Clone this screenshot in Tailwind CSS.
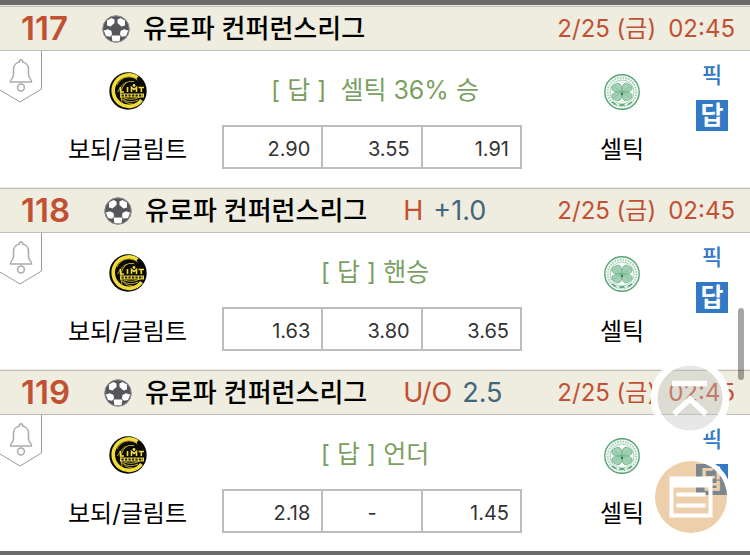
<!DOCTYPE html>
<html lang="ko">
<head>
<meta charset="utf-8">
<meta name="viewport" content="width=device-width, initial-scale=1">
<title>유로파 컨퍼런스리그</title>
<script src="https://cdn.jsdelivr.net/npm/@tailwindcss/browser@4"></script>
</head>
<body class="relative bg-white text-black font-['Inter','Noto_Sans_CJK_KR',sans-serif]">

<svg class="hidden" aria-hidden="true">
  <symbol id="ball" viewBox="0 0 28 28">
    <defs><clipPath id="ballclip"><circle cx="14" cy="14" r="13"/></clipPath></defs>
    <circle cx="14" cy="14" r="13.5" fill="#888"/>
    <g clip-path="url(#ballclip)">
      <circle cx="14" cy="14" r="13" fill="#55565a"/>
      <g fill="#fff">
        <path d="M5 5.500 9.500 3 12.500 4.500 12.500 8 8.500 11.500 5 10.500Z"/>
        <path d="M23 5.500 18.500 3 15.500 4.500 15.500 8 19.500 11.500 23 10.500Z"/>
        <path d="M1.800 15.500 6 14.200 9.500 16 10 19.500 8 21.800 4 21Z"/>
        <path d="M26.200 15.500 22 14.200 18.500 16 18 19.500 20 21.800 24 21Z"/>
        <path d="M9.500 20.500H18.500L17.500 26.500H10.500Z"/>
      </g>
    </g>
    <circle cx="14" cy="14" r="13.200" fill="none" stroke="#8a8a8a" stroke-width="1"/>
  </symbol>
  <symbol id="bell" viewBox="0 0 43 53">
    <path d="M41.500 0V38L20 51 0 39" fill="none" stroke="#999" stroke-width="1"/>
    <g fill="none" stroke="#aaa" stroke-width="1.500" stroke-linejoin="round">
      <path d="M10.500 31C10 28.500 13 28 13.500 24V18.500C13.500 14.500 16 11.500 19.500 11V9.500Q21 8 22.500 9.500V11C26 11.500 28.500 14.500 28.500 18.500V24C29 28 32 28.500 31.500 31Z"/>
      <circle cx="21" cy="36.500" r="3.400"/>
    </g>
  </symbol>
  <symbol id="bodo" viewBox="0 0 38 38">
    <circle cx="19" cy="19" r="18.700" fill="#090905"/>
    <path d="M28.500 5.500A15.700 15.700 0 1 0 32.500 28" fill="none" stroke="#f2dc3b" stroke-width="3.600"/>
    <g fill="none" stroke="#c9b833" stroke-width=".9">
      <path d="M28.500 8A13 13 0 0 0 8 13M25 9.500Q14 8 8.500 20M18 10Q9 17 13 30M14 27Q20 32 29 28M15 26Q23 29 31 25M12 25Q16 32 24 32"/>
    </g>
    <path d="M11.500 15V20H15M18.500 15V20M22.500 20V15.500L25 17.500 27.500 15.500V20M29.500 15.500H35M32.300 15.500V20" stroke="#f2dc3b" stroke-width="1.600" fill="none"/>
    <circle cx="25" cy="13.500" r="1.400" fill="#f2dc3b"/>
    <path d="M11 21.500H35V25.500H11Z" fill="#e8d238"/>
    <path d="M12.500 23.500H34" stroke="#222" stroke-width="1.800" stroke-dasharray="2.200 1.300"/>
  </symbol>
  <symbol id="celtic" viewBox="0 0 36 36">
    <circle cx="18" cy="18" r="17.200" fill="#f6fbf8" stroke="#57a575" stroke-width="1.400"/>
    <circle cx="18" cy="18" r="14.300" fill="none" stroke="#a3cfb4" stroke-width="2" stroke-dasharray="1.500 1.200"/>
    <circle cx="18" cy="18" r="12" fill="none" stroke="#93c7a7" stroke-width=".8"/>
    <g fill="#a4d1b6" stroke="#62ab7e" stroke-width=".8">
      <path d="M18 18C12 18.500 7 16.500 8 14 7.500 11 11 11 12.500 9.500 16 8 18.500 12 18 18Z"/>
      <path d="M18 18C24 18.500 29 16.500 28 14 28.500 11 25 11 23.500 9.500 20 8 17.500 12 18 18Z"/>
      <path d="M18 18C12 17.500 7 19.500 8 22 7.500 25 11 25 12.500 26.500 16 28 18.500 24 18 18Z"/>
      <path d="M18 18C24 17.500 29 19.500 28 22 28.500 25 25 25 23.500 26.500 20 28 17.500 24 18 18Z"/>
    </g>
    <path d="M18 18 10.500 13M18 18 25.500 13M18 18 10.500 23M18 18 25.500 23" stroke="#6fb389" stroke-width=".6"/>
    <circle cx="18" cy="20" r="1.200" fill="#28834e"/>
    <path d="M8 28 12 30.500M28 28 24 30.500M15.500 31H20.500" stroke="#429765" stroke-width="1.300"/>
  </symbol>
</svg>

<main class="border-t-5 border-b-4 border-[#6b6b6b]">

  <article class="border-t border-[#efeddf]">
    <header class="flex h-[45px] items-center border-y border-[#bdbdbd] bg-[#efeddf] pr-[15px] pl-[21px]">
      <span class="text-[33px] leading-none font-semibold text-[#c25033]">117</span>
      <svg class="ml-[34px] size-7" role="img" aria-label="축구"><use href="#ball"/></svg>
      <h2 class="ml-[13px] text-[26px] leading-none font-medium">유로파 컨퍼런스리그</h2>
      <time class="ml-auto flex gap-3 text-2xl leading-none text-[#c25033]"><span>2/25 (금)</span><span>02:45</span></time>
    </header>
    <div class="relative grid grid-cols-[222fr_300fr_228fr]">
      <button class="absolute top-0 left-0" aria-label="알림"><svg class="h-[53px] w-[43px]"><use href="#bell"/></svg></button>
      <section class="flex flex-col items-center pt-[21px] pl-[33px]">
        <svg class="size-[38px]" role="img" aria-label="보되/글림트 로고"><use href="#bodo"/></svg>
        <span class="mt-6 text-2xl leading-8">보되/글림트</span>
      </section>
      <section class="flex flex-col items-stretch pt-5 pb-[18px]">
        <p class="mb-4 pl-1.5 text-center text-[25px] leading-[38px] whitespace-pre text-[#7b9f62]">[ 답 ]  셀틱 36% 승</p>
        <table class="h-11 w-full table-fixed border-collapse text-right text-xl leading-none text-[#333]">
          <tr><td class="border-2 border-[#bdbdbd] pt-[3px] pr-[11px]">2.90</td><td class="border-2 border-[#bdbdbd] pt-[3px] pr-[11px]">3.55</td><td class="border-2 border-[#bdbdbd] pt-[3px] pr-[11px]">1.91</td></tr>
        </table>
      </section>
      <div class="flex">
        <section class="flex flex-1 flex-col items-center pt-[23px] pl-12">
          <svg class="size-9" role="img" aria-label="셀틱 로고"><use href="#celtic"/></svg>
          <span class="mt-6 text-2xl leading-8">셀틱</span>
        </section>
        <nav class="flex w-[76px] flex-col items-center gap-[13px] pt-3">
          <a href="#pick" class="text-[22px] leading-6 font-medium text-[#3279c6]">픽</a>
          <a href="#answer" class="bg-[#3279c6] px-1 text-[25px] leading-[31px] font-bold text-white">답</a>
        </nav>
      </div>
    </div>
  </article>

  <article class="border-t border-[#efeddf]">
    <header class="flex h-[45px] items-center border-y border-[#bdbdbd] bg-[#efeddf] pr-[15px] pl-[21px]">
      <span class="text-[33px] leading-none font-semibold text-[#c25033]">118</span>
      <svg class="ml-[34px] size-7" role="img" aria-label="축구"><use href="#ball"/></svg>
      <h2 class="ml-[13px] text-[26px] leading-none font-medium">유로파 컨퍼런스리그</h2>
      <span class="ml-9 text-[27px] leading-none text-[#c25033]">H</span>
      <span class="ml-[10px] text-[27px] leading-none text-[#42677c]">+1.0</span>
      <time class="ml-auto flex gap-3 text-2xl leading-none text-[#c25033]"><span>2/25 (금)</span><span>02:45</span></time>
    </header>
    <div class="relative grid grid-cols-[222fr_300fr_228fr]">
      <button class="absolute top-0 left-0" aria-label="알림"><svg class="h-[53px] w-[43px]"><use href="#bell"/></svg></button>
      <section class="flex flex-col items-center pt-[21px] pl-[33px]">
        <svg class="size-[38px]" role="img" aria-label="보되/글림트 로고"><use href="#bodo"/></svg>
        <span class="mt-6 text-2xl leading-8">보되/글림트</span>
      </section>
      <section class="flex flex-col items-stretch pt-5 pb-[18px]">
        <p class="mb-4 pl-1.5 text-center text-[25px] leading-[38px] whitespace-pre text-[#7b9f62]">[ 답 ] 핸승</p>
        <table class="h-11 w-full table-fixed border-collapse text-right text-xl leading-none text-[#333]">
          <tr><td class="border-2 border-[#bdbdbd] pt-[3px] pr-[11px]">1.63</td><td class="border-2 border-[#bdbdbd] pt-[3px] pr-[11px]">3.80</td><td class="border-2 border-[#bdbdbd] pt-[3px] pr-[11px]">3.65</td></tr>
        </table>
      </section>
      <div class="flex">
        <section class="flex flex-1 flex-col items-center pt-[23px] pl-12">
          <svg class="size-9" role="img" aria-label="셀틱 로고"><use href="#celtic"/></svg>
          <span class="mt-6 text-2xl leading-8">셀틱</span>
        </section>
        <nav class="flex w-[76px] flex-col items-center gap-[13px] pt-3">
          <a href="#pick" class="text-[22px] leading-6 font-medium text-[#3279c6]">픽</a>
          <a href="#answer" class="bg-[#3279c6] px-1 text-[25px] leading-[31px] font-bold text-white">답</a>
        </nav>
      </div>
    </div>
  </article>

  <article class="border-t border-[#efeddf]">
    <header class="flex h-[45px] items-center border-y border-[#bdbdbd] bg-[#efeddf] pr-[15px] pl-[21px]">
      <span class="text-[33px] leading-none font-semibold text-[#c25033]">119</span>
      <svg class="ml-[34px] size-7" role="img" aria-label="축구"><use href="#ball"/></svg>
      <h2 class="ml-[13px] text-[26px] leading-none font-medium">유로파 컨퍼런스리그</h2>
      <span class="ml-9 text-[27px] leading-none text-[#c25033]">U/O</span>
      <span class="ml-[10px] text-[27px] leading-none text-[#42677c]">2.5</span>
      <time class="ml-auto flex gap-3 text-2xl leading-none text-[#c25033]"><span>2/25 (금)</span><span>02:45</span></time>
    </header>
    <div class="relative grid grid-cols-[222fr_300fr_228fr]">
      <button class="absolute top-0 left-0" aria-label="알림"><svg class="h-[53px] w-[43px]"><use href="#bell"/></svg></button>
      <section class="flex flex-col items-center pt-[21px] pl-[33px]">
        <svg class="size-[38px]" role="img" aria-label="보되/글림트 로고"><use href="#bodo"/></svg>
        <span class="mt-6 text-2xl leading-8">보되/글림트</span>
      </section>
      <section class="flex flex-col items-stretch pt-5 pb-[18px]">
        <p class="mb-4 pl-1.5 text-center text-[25px] leading-[38px] whitespace-pre text-[#7b9f62]">[ 답 ] 언더</p>
        <table class="h-11 w-full table-fixed border-collapse text-right text-xl leading-none text-[#333]">
          <tr><td class="border-2 border-[#bdbdbd] pt-[3px] pr-[11px]">2.18</td><td class="border-2 border-[#bdbdbd] pt-[3px] text-center">-</td><td class="border-2 border-[#bdbdbd] pt-[3px] pr-[11px]">1.45</td></tr>
        </table>
      </section>
      <div class="flex">
        <section class="flex flex-1 flex-col items-center pt-[23px] pl-12">
          <svg class="size-9" role="img" aria-label="셀틱 로고"><use href="#celtic"/></svg>
          <span class="mt-6 text-2xl leading-8">셀틱</span>
        </section>
        <nav class="flex w-[76px] flex-col items-center gap-[13px] pt-3">
          <a href="#pick" class="text-[22px] leading-6 font-medium text-[#3279c6]">픽</a>
          <a href="#answer" class="bg-[#3279c6] px-1 text-[25px] leading-[31px] font-bold text-white">답</a>
        </nav>
      </div>
    </div>
  </article>
</main>

<button class="fixed right-5 bottom-[117px]" aria-label="맨 위로">
  <svg class="block size-20" viewBox="0 0 80 80">
    <circle cx="40" cy="40" r="33" fill="#c0c0c0" fill-opacity=".38"/>
    <circle cx="40" cy="40" r="36" fill="none" stroke="#fff" stroke-width="7"/>
    <path d="M22 25.500H57M24 56 40 41 56 56" fill="none" stroke="#fff" stroke-width="5.500"/>
  </svg>
</button>
<button class="fixed right-[19px] bottom-[18px]" aria-label="목록">
  <svg class="block size-20 overflow-visible" viewBox="0 0 80 80">
    <circle cx="40" cy="40" r="38.500" fill="none" stroke="#fff" stroke-width="5"/>
    <circle cx="40" cy="40" r="36" fill="#d8974b" fill-opacity=".46"/>
    <path d="M18.500 19.500H61.500V60.500H18.500ZM22.500 30.500V56.500H57.500V30.500Z" fill="#fff" fill-rule="evenodd"/>
    <path d="M25.500 37.500H54.500M25.500 48.500H54.500" stroke="#fff" stroke-width="4"/>
  </svg>
</button>
<div class="fixed top-[308px] right-[6px] h-[72px] w-[6px] rounded-full bg-black/35"></div>
</body>
</html>
